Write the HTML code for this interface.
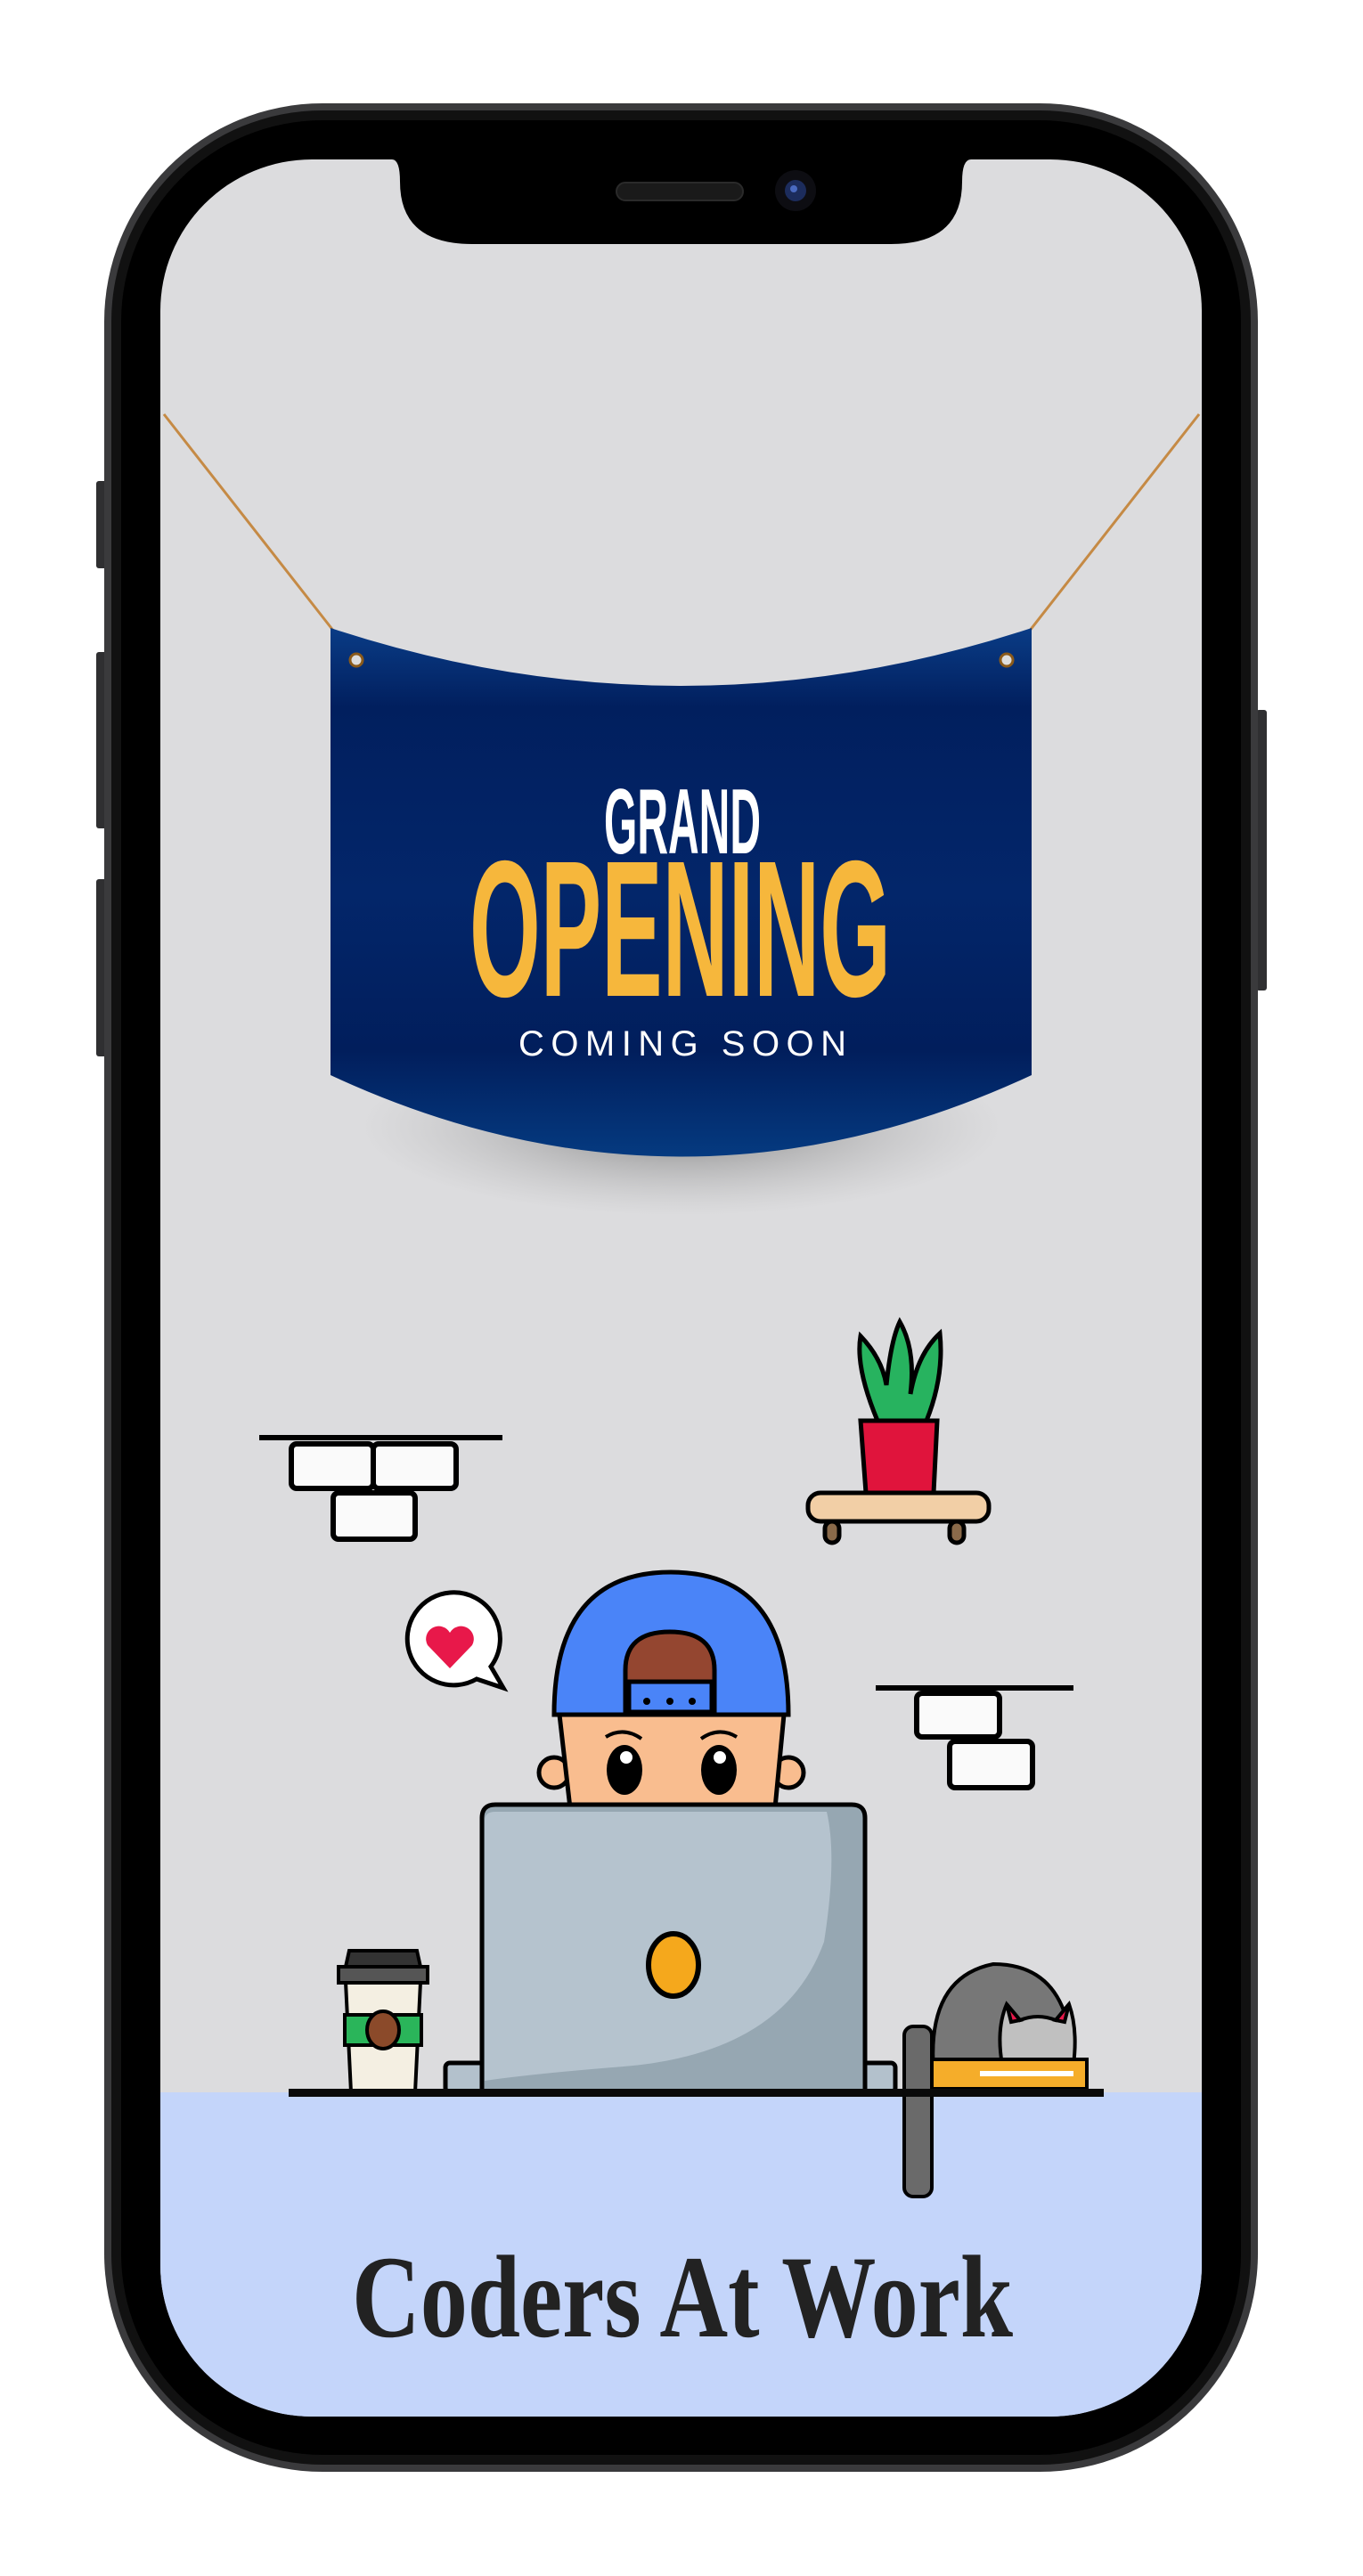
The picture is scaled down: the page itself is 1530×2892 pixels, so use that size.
<!DOCTYPE html>
<html><head><meta charset="utf-8"><style>
html,body{margin:0;padding:0;background:#fff;width:1530px;height:2892px;overflow:hidden}
svg{display:block}
</style></head><body>
<svg width="1530" height="2892" viewBox="0 0 1530 2892" xmlns="http://www.w3.org/2000/svg">
<defs>
<radialGradient id="sh" cx="0.5" cy="0.5" r="0.5"><stop offset="0" stop-color="#666" stop-opacity="0.75"/><stop offset="1" stop-color="#aaa" stop-opacity="0"/></radialGradient>
<linearGradient id="ban" x1="0" y1="0" x2="0" y2="1"><stop offset="0" stop-color="#0a3c86"/><stop offset="0.15" stop-color="#011f5e"/><stop offset="0.5" stop-color="#03266a"/><stop offset="0.8" stop-color="#011e5c"/><stop offset="1" stop-color="#053a80"/></linearGradient>
</defs>
<rect x="108" y="540" width="12" height="98" rx="3" fill="#2f2f31"/>
<rect x="108" y="732" width="12" height="198" rx="3" fill="#2f2f31"/>
<rect x="108" y="987" width="12" height="199" rx="3" fill="#2f2f31"/>
<rect x="1410" y="797" width="12" height="315" rx="3" fill="#2f2f31"/>
<rect x="117" y="116" width="1295" height="2659" rx="245" fill="#3a3a3c"/>
<rect x="125" y="124" width="1279" height="2643" rx="237" fill="#111"/>
<rect x="136" y="135" width="1257" height="2621" rx="226" fill="#000"/>
<clipPath id="scr"><rect x="180" y="179" width="1169" height="2534" rx="170"/></clipPath>
<g clip-path="url(#scr)">
<rect x="180" y="179" width="1169" height="2534" fill="#dcdcde"/>
<rect x="180" y="2349" width="1169" height="364" fill="#c4d5fa"/>
</g>
<path d="M440 179 H1090 Q1080 179 1080 204 Q1080 274 1000 274 H530 Q449 274 449 204 Q449 179 440 179 Z" fill="#000"/>
<rect x="692" y="205" width="142" height="20" rx="10" fill="#1a1a1a" stroke="#2a2a2a" stroke-width="2"/>
<circle cx="893" cy="214" r="23" fill="#0d0d12"/>
<circle cx="893" cy="214" r="12" fill="#1c2c5c"/>
<circle cx="891" cy="212" r="4" fill="#4a6ac0"/>
<ellipse cx="765" cy="1265" rx="360" ry="100" fill="url(#sh)"/>
<line x1="184" y1="465" x2="400" y2="741" stroke="#c58a45" stroke-width="3"/>
<line x1="1346" y1="465" x2="1130" y2="741" stroke="#c58a45" stroke-width="3"/>
<path d="M371 705 Q765 835 1158 705 L1158 1207 Q765 1390 371 1207 Z" fill="url(#ban)"/>
<circle cx="400" cy="741" r="7" fill="#ddd" stroke="#8a5a1a" stroke-width="3"/>
<circle cx="1130" cy="741" r="7" fill="#ddd" stroke="#8a5a1a" stroke-width="3"/>
<text x="678" y="958" textLength="176" lengthAdjust="spacingAndGlyphs" font-family="Liberation Sans, sans-serif" font-weight="bold" font-size="104" fill="#fff">GRAND</text>
<text x="527" y="1118" textLength="473" lengthAdjust="spacingAndGlyphs" font-family="Liberation Sans, sans-serif" font-weight="bold" font-size="218" fill="#f6b73c">OPENING</text>
<text x="582" y="1185" textLength="368" lengthAdjust="spacing" font-family="Liberation Sans, sans-serif" font-size="40" fill="#fff">COMING SOON</text>
<g stroke="#000" stroke-width="6" fill="#fafafa">
<line x1="291" y1="1614" x2="564" y2="1614"/>
<rect x="327" y="1621" width="92" height="50" rx="6"/>
<rect x="419" y="1621" width="93" height="50" rx="6"/>
<rect x="374" y="1676" width="92" height="52" rx="6"/>
</g>
<g stroke="#000" stroke-width="6" fill="#fafafa">
<line x1="983" y1="1895" x2="1205" y2="1895"/>
<rect x="1029" y="1901" width="93" height="49" rx="6"/>
<rect x="1066" y="1955" width="93" height="52" rx="6"/>
</g>
<g stroke="#000" stroke-width="5">
<path d="M985 1595 Q960 1535 966 1500 Q990 1525 995 1555 Q1000 1505 1010 1484 Q1028 1515 1022 1565 Q1030 1520 1055 1497 Q1060 1545 1040 1595 Z" fill="#27b35f"/>
<path d="M966 1595 H1052 L1048 1676 H972 Z" fill="#e0143c"/>
<rect x="907" y="1676" width="203" height="32" rx="14" fill="#f2cfa6"/>
<rect x="926" y="1708" width="16" height="24" rx="8" fill="#8a6a4a"/>
<rect x="1066" y="1708" width="16" height="24" rx="8" fill="#8a6a4a"/>
</g>
<path d="M505 1788 a52 52 0 1 0 30 97 l30 10 l-14 -24 a52 52 0 0 0 -46 -83 Z" fill="#fff" stroke="#000" stroke-width="5"/>
<path d="M505 1873 L480 1847 a14 14 0 1 1 25 -14 a14 14 0 1 1 25 14 Z" fill="#e8184a"/>
<g stroke="#000" stroke-width="5">
<circle cx="622" cy="1990" r="17" fill="#f9bd8f"/>
<circle cx="885" cy="1990" r="17" fill="#f9bd8f"/>
<path d="M628 1925 H880 L870 2030 H640 Z" fill="#f9bd8f"/>
<path d="M622 1925 Q622 1765 753 1765 Q885 1765 885 1925 Z" fill="#4a84f8"/>
<path d="M702 1925 V1875 Q702 1832 752 1832 Q802 1832 802 1875 V1925 Z" fill="#944630"/>
<rect x="706" y="1888" width="93" height="34" fill="#4a84f8"/>
</g>
<circle cx="726" cy="1910" r="4"/><circle cx="752" cy="1910" r="4"/><circle cx="777" cy="1910" r="4"/>
<ellipse cx="701" cy="1987" rx="20" ry="28"/><ellipse cx="807" cy="1987" rx="20" ry="28"/>
<circle cx="703" cy="1973" r="7" fill="#fff"/><circle cx="808" cy="1973" r="7" fill="#fff"/>
<path d="M680 1950 Q700 1938 720 1952 M787 1952 Q807 1938 827 1950" stroke="#000" stroke-width="4" fill="none"/>
<rect x="500" y="2316" width="55" height="33" rx="5" fill="#b3c1cc" stroke="#000" stroke-width="5"/>
<rect x="960" y="2316" width="45" height="33" rx="5" fill="#b3c1cc" stroke="#000" stroke-width="5"/>
<path d="M541 2349 V2041 Q541 2026 556 2026 H956 Q971 2026 971 2041 V2349 Z" fill="#96a7b2" stroke="#000" stroke-width="5"/>
<path d="M544 2336 V2044 Q544 2034 556 2034 H928 Q940 2085 925 2180 Q880 2305 700 2320 Q600 2328 544 2336 Z" fill="#b5c3ce"/>
<ellipse cx="756" cy="2206" rx="28" ry="35" fill="#f5a81c" stroke="#000" stroke-width="6"/>
<g stroke="#000" stroke-width="4">
<path d="M388 2225 H472 L466 2349 H394 Z" fill="#f4efe2"/>
<rect x="380" y="2208" width="100" height="18" fill="#555"/>
<path d="M392 2190 H468 L472 2208 H388 Z" fill="#333"/>
<rect x="387" y="2262" width="86" height="34" fill="#2ab55a"/>
<ellipse cx="430" cy="2279" rx="18" ry="21" fill="#8b4a2a"/>
</g>
<g stroke="#000" stroke-width="4">
<path d="M1048 2325 Q1040 2220 1115 2205 Q1185 2205 1200 2278 L1200 2325 Z" fill="#777"/>
<path d="M1125 2318 Q1118 2278 1130 2250 L1145 2268 Q1165 2260 1185 2268 L1200 2250 Q1210 2278 1205 2318 Z" fill="#c0c0c0"/>
<path d="M1130 2250 L1145 2268 L1135 2270 Z M1200 2250 L1185 2268 L1195 2270 Z" fill="#e8184a"/>
<rect x="1044" y="2312" width="176" height="33" fill="#f5ad2a"/>
<rect x="1015" y="2275" width="31" height="191" rx="10" fill="#6a6a6a"/>
</g>
<line x1="1100" y1="2328" x2="1205" y2="2328" stroke="#fff" stroke-width="6"/>
<rect x="324" y="2345" width="915" height="9" fill="#0a0a0a"/>
<text x="395" y="2623" textLength="742" lengthAdjust="spacingAndGlyphs" font-family="Liberation Serif, serif" font-weight="bold" font-size="132" fill="#222">Coders At Work</text>
</svg>
</body></html>
